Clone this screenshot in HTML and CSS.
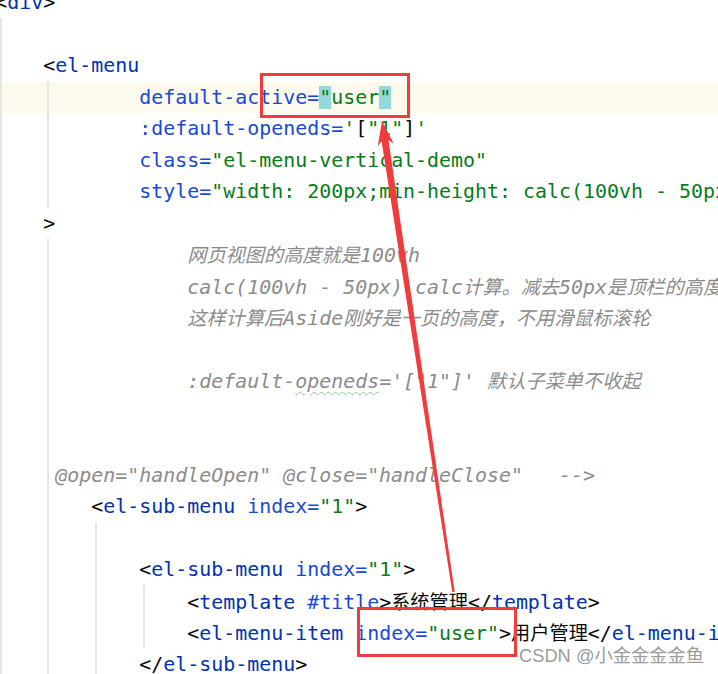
FILE: index.html
```html
<!DOCTYPE html>
<html lang="zh">
<head>
    <meta charset="UTF-8">
    <title>el-menu</title>
    <link rel="stylesheet" href="styles.css">
</head>
<body>

    <div class="screen">
        <div class="editor">
            <div class="line">&lt;<span class="t">div</span>&gt;</div>
            <div class="line"></div>
            <div class="line">    &lt;<span class="t">el-menu</span></div>
            <div class="line current">            <span class="a">default-active=</span><span class="v"><span class="m">"</span>user<span class="m">"</span></span></div>
            <div class="line">            <span class="a">:default-openeds=</span><span class="v">'</span>[<span class="v">"1"</span>]<span class="v">'</span></div>
            <div class="line">            <span class="a">class=</span><span class="v">"el-menu-vertical-demo"</span></div>
            <div class="line">            <span class="a">style=</span><span class="v">"width: 200px;min-height: calc(100vh - 50px)"</span></div>
            <div class="line">    &gt;</div>
            <div class="line c">                <span class="cjk">网页视图的高度就是</span>100vh</div>
            <div class="line c">                calc(100vh - 50px) calc<span class="cjk">计算。减去</span>50px<span class="cjk">是顶栏的高度</span></div>
            <div class="line c">                <span class="cjk">这样计算后</span>Aside<span class="cjk">刚好是一页的高度，不用滑鼠标滚轮</span></div>
            <div class="line"></div>
            <div class="line c">                :default-<span class="typo">openeds</span>='["1"]' <span class="cjk">默认子菜单不收起</span></div>
            <div class="line"></div>
            <div class="line"></div>
            <div class="line c">     @open="handleOpen" @close="handleClose"   --&gt;</div>
            <div class="line">        &lt;<span class="t">el-sub-menu</span> <span class="a">index=</span><span class="v">"1"</span>&gt;</div>
            <div class="line"></div>
            <div class="line">            &lt;<span class="t">el-sub-menu</span> <span class="a">index=</span><span class="v">"1"</span>&gt;</div>
            <div class="line">                &lt;<span class="t">template</span> <span class="a">#title</span>&gt;<span class="cjk">系统管理</span>&lt;/<span class="t">template</span>&gt;</div>
            <div class="line">                &lt;<span class="t">el-menu-item</span> <span class="a">index=</span><span class="v">"user"</span>&gt;<span class="cjk">用户管理</span>&lt;/<span class="t">el-menu-item</span>&gt;</div>
            <div class="line">            &lt;/<span class="t">el-sub-menu</span>&gt;</div>
        </div>

        <!-- indent guides -->
        <div class="guide g0"></div>
        <div class="guide g4a"></div>
        <div class="guide g4b"></div>
        <div class="guide g8"></div>
        <div class="guide g12"></div>

        <svg class="marks" width="718" height="674" viewBox="0 0 718 674">
            <rect x="261.5" y="74.5" width="147" height="42" fill="none" stroke="#f03c3c" stroke-width="3"/>
            <rect x="358.5" y="608.5" width="157" height="47" fill="none" stroke="#f03c3c" stroke-width="3"/>
            <polygon fill="#f03c3c" points="382,121 393.6,143.5 388.5,140.3 454.7,591.8 452.3,592.2 381.6,141.3 377.8,145.9"/>
        </svg>

        <div class="watermark">CSDN @小金金金金鱼</div>
    </div>

</body>
</html>
```

FILE: styles.css
```css
body {
    margin: 0;
    background-color: #ffffff;
    overflow: hidden;
}

.screen {
    position: relative;
    width: 718px;
    height: 674px;
    overflow: hidden;
}

.editor {
    margin-top: -12.8px;
    margin-left: -4.7px;
    font-family: "DejaVu Sans Mono", "Noto Sans CJK SC", monospace;
    font-size: 19.93px;
    line-height: 31.5px;
    color: #080808;
}

.line {
    height: 31.5px;
    white-space: pre;
}

.current {
    background-color: #fcfaed;
}

.t {
    color: #0033b3;
}

.a {
    color: #174ad4;
}

.v {
    color: #067d17;
}

.m {
    background-color: #93d9d9;
}

.c {
    color: #8c8c8c;
    font-style: italic;
}

.cjk {
    font-family: "Noto Sans CJK SC", sans-serif;
    font-size: 19.2px;
}

.typo {
    text-decoration: underline wavy #8fcf8f;
    text-decoration-thickness: 1px;
    text-underline-offset: 3px;
}

.guide {
    position: absolute;
    width: 2px;
    background-color: #e6e6e6;
}

.g0 {
    left: 0;
    top: 18px;
    bottom: 0;
}

.g4a {
    left: 47px;
    top: 81px;
    height: 126px;
}

.g4b {
    left: 47px;
    top: 239px;
    bottom: 0;
}

.g8 {
    left: 95px;
    top: 522px;
    bottom: 0;
}

.g12 {
    left: 143px;
    top: 585px;
    height: 63px;
}

.marks {
    position: absolute;
    left: 0;
    top: 0;
}

.watermark {
    position: absolute;
    left: 519px;
    top: 646px;
    font-family: "Liberation Sans", "Noto Sans CJK SC", sans-serif;
    font-size: 18.3px;
    line-height: 19px;
    color: #9c9c9c;
    text-shadow: 0 0 2px #ffffff;
    white-space: nowrap;
}
```
